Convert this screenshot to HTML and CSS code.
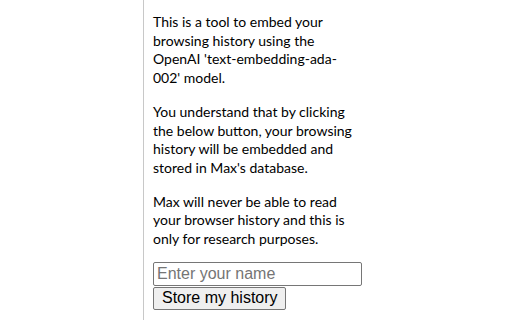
FILE: index.html
```html
<!DOCTYPE html>
<html>
<head>
<meta charset="utf-8">
<link rel="stylesheet" href="styles.css">
</head>
<body>
<div class="page">
  <div class="panel">
    <p>This is a tool to embed your browsing history using the OpenAI 'text-embedding-ada-002' model.</p>
    <p>You understand that by clicking the below button, your browsing history will be embedded and stored in Max's database.</p>
    <p>Max will never be able to read your browser history and this is only for research purposes.</p>
    <form class="form">
      <input class="name" type="text" placeholder="Enter your name">
      <button class="store" type="button">Store my history</button>
    </form>
  </div>
</div>
</body>
</html>
```

FILE: styles.css
```css
html, body {
  margin: 0;
  padding: 0;
  background: #ffffff;
  height: 100%;
  overflow: hidden;
}
.page {
  display: flex;
  height: 320px;
  padding-left: 143px;
}
.panel {
  border-left: 1px solid #c8c8c8;
  padding: 0 0 0 9px;
  width: 204px;
  font-family: "Lato", "Noto Sans", sans-serif;
  font-size: 14px;
  line-height: 18.7px;
  color: #000;
}
.panel p {
  margin: 15px 0 15px 0;
}
.panel p:first-child {
  margin-top: 13px;
}
.panel p:last-of-type {
  margin-bottom: 0;
}
.form {
  display: flex;
  flex-direction: column;
  align-items: flex-start;
  gap: 1px;
  margin-top: 13px;
}
.name {
  font-family: "Liberation Sans", Arial, sans-serif;
  font-size: 16px;
  width: 209px;
  flex: none;
  height: 24px;
  box-sizing: border-box;
  padding: 1px 3px;
  border: 1px solid #767676;
  border-radius: 2px;
  color: #000;
}
.name::placeholder {
  color: #757575;
}
.store {
  font-family: "Liberation Sans", Arial, sans-serif;
  font-size: 16px;
  height: 23px;
  box-sizing: border-box;
  padding: 0 7px 0 8px;
  border: 1px solid #767676;
  border-radius: 2px;
  background: #efefef;
  color: #000;
}
```
